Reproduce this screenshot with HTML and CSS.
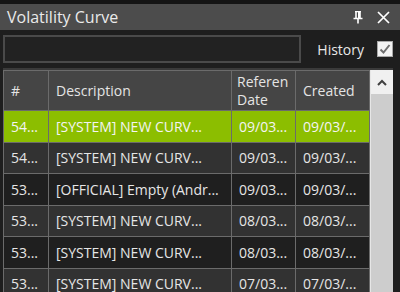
FILE: index.html
```html
<!DOCTYPE html>
<html>
<head>
    <title>Volatility Curve</title>
    <link rel="stylesheet" href="styles.css">
</head>
<body>
    <div class="panel">
        <div class="topband"></div>
        <div class="titlebar">
            <span class="title">Volatility Curve</span>
            <span class="title-icons">
                <svg class="pin" width="10" height="13" viewBox="0 0 10 13">
                    <path d="M2 0.5h6M3 0.5v7M7 0.5v7M0.5 7.5h9M5 7.5v5" stroke="#ffffff" stroke-width="1.6" fill="none"/>
                    <rect x="5" y="1" width="2" height="6.5" fill="#ffffff"/>
                </svg>
                <svg class="close" width="13" height="13" viewBox="0 0 13 13">
                    <path d="M1 1L12 12M12 1L1 12" stroke="#ffffff" stroke-width="1.7"/>
                </svg>
            </span>
        </div>
        <div class="toolbar">
            <input type="text" class="search" />
            <label class="history" for="history">History</label>
            <span class="checkbox">
                <svg width="12" height="12" viewBox="0 0 12 12">
                    <path d="M1.5 6.5L4.5 9.5L10.5 2" stroke="#6e6e6e" stroke-width="2" fill="none"/>
                </svg>
            </span>
        </div>
        <div class="grid">
            <table class="curves">
                <colgroup>
                    <col class="c-id">
                    <col class="c-desc">
                    <col class="c-ref">
                    <col class="c-created">
                </colgroup>
                <thead>
                    <tr>
                        <th>#</th>
                        <th>Description</th>
                        <th class="wrap"><span class="line">Referen</span><span class="line">Date</span></th>
                        <th>Created</th>
                    </tr>
                </thead>
                <tbody>
                    <tr class="selected"><td>54...</td><td>[SYSTEM] NEW CURV...</td><td>09/03...</td><td>09/03/...</td></tr>
                    <tr class="light"><td>54...</td><td>[SYSTEM] NEW CURV...</td><td>09/03...</td><td>09/03/...</td></tr>
                    <tr class="dark"><td>53...</td><td>[OFFICIAL] Empty (Andr...</td><td>09/03...</td><td>09/03/...</td></tr>
                    <tr class="light"><td>53...</td><td>[SYSTEM] NEW CURV...</td><td>08/03...</td><td>08/03/...</td></tr>
                    <tr class="dark"><td>53...</td><td>[SYSTEM] NEW CURV...</td><td>08/03...</td><td>08/03/...</td></tr>
                    <tr class="light"><td>53...</td><td>[SYSTEM] NEW CURV...</td><td>07/03...</td><td>07/03/...</td></tr>
                </tbody>
            </table>
            <div class="scrollbar">
                <div class="scroll-up">
                    <svg width="10" height="7" viewBox="0 0 10 7">
                        <path d="M1 6L5 2L9 6" stroke="#404040" stroke-width="2" fill="none"/>
                    </svg>
                </div>
            </div>
        </div>
    </div>
</body>
</html>
```

FILE: styles.css
```css
body {
    margin: 0;
    padding: 0;
    width: 400px;
    height: 292px;
    overflow: hidden;
    background-color: #101010;
    font-family: "Open Sans", "Liberation Sans", Arial, sans-serif;
}

.panel {
    height: 292px;
    background-color: #1e1e1e;
    overflow: hidden;
}

.topband {
    height: 4px;
    background-color: #141414;
}

.titlebar {
    height: 26px;
    background-color: #4c4c4c;
    display: flex;
    align-items: center;
    justify-content: space-between;
    padding: 0 10px 0 7px;
}

.title {
    color: #eaeaea;
    font-size: 16px;
}

.title-icons {
    display: flex;
    align-items: center;
    gap: 14px;
}

.toolbar {
    display: flex;
    align-items: center;
    padding: 5px 0 5px 3px;
    margin-right: 7px;
    background-color: #1e1e1e;
}

.search {
    width: 299px;
    height: 28px;
    box-sizing: border-box;
    background-color: #222222;
    border: 2px solid #4a4a4a;
    margin: 0;
}

.history {
    color: #e8e8e8;
    font-size: 14px;
    margin-left: 16px;
}

.checkbox {
    width: 16px;
    height: 16px;
    box-sizing: border-box;
    margin-left: 13px;
    background-color: #f2f2f2;
    border: 1px solid #a8a8a8;
    display: flex;
    align-items: center;
    justify-content: center;
}

.grid {
    display: flex;
    margin: 0 7px 0 3px;
    border-top: 2px solid #3a3a3a;
}

.curves {
    width: 366px;
    table-layout: fixed;
    border-collapse: collapse;
    font-size: 14px;
    color: #e6e6e6;
}

.c-id { width: 45px; }
.c-desc { width: 183px; }
.c-ref { width: 64px; }
.c-created { width: 74px; }

.curves th,
.curves td {
    border: 1px solid #6b6b6b;
    padding: 0 0 0 7px;
    text-align: left;
    white-space: nowrap;
    overflow: hidden;
    font-weight: normal;
}

.curves th {
    height: 39px;
    background-color: #454545;
    color: #e4e4e4;
}

.curves th.wrap {
    padding-left: 5px;
    line-height: 18px;
}

.line {
    display: block;
    height: 18px;
}

.curves td {
    height: 30px;
}

.selected td {
    background-color: #8cbe00;
    color: #f4f4f4;
}

.light td {
    background-color: #323232;
}

.dark td {
    background-color: #1f1f1f;
}

.scrollbar {
    width: 24px;
    background-color: #cdcdcd;
    border-left: 1px solid #e6e6e6;
    height: 230px;
}

.scroll-up {
    height: 24px;
    background-color: #f0f0f0;
    display: flex;
    align-items: center;
    justify-content: center;
}
```
